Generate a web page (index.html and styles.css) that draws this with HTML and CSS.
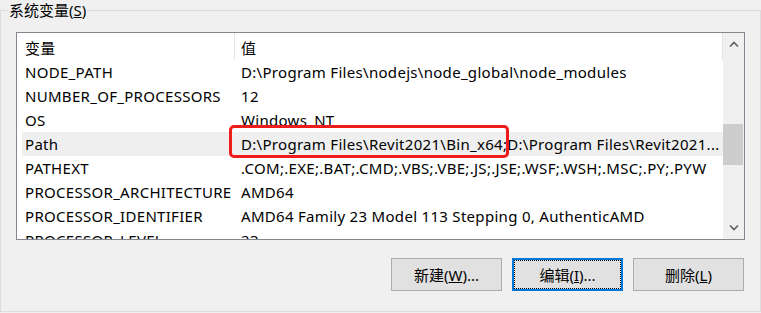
FILE: index.html
```html
<!DOCTYPE html>
<html lang="zh-CN">
<head>
    <meta charset="UTF-8">
    <title>系统变量</title>
    <link rel="stylesheet" href="styles.css">
</head>
<body>

<fieldset class="group">
    <legend>系统变量(<u>S</u>)</legend>

    <div class="list">
        <div class="rows">
            <div class="row head"><span class="name">变量</span><span class="value">值</span></div>
            <div class="row"><span class="name">NODE_PATH</span><span class="value">D:\Program Files\nodejs\node_global\node_modules</span></div>
            <div class="row"><span class="name">NUMBER_OF_PROCESSORS</span><span class="value">12</span></div>
            <div class="row"><span class="name">OS</span><span class="value">Windows_NT</span></div>
            <div class="row selected"><span class="name">Path</span><span class="value">D:\Program Files\Revit2021\Bin_x64;D:\Program Files\Revit2021...</span></div>
            <div class="row"><span class="name">PATHEXT</span><span class="value">.COM;.EXE;.BAT;.CMD;.VBS;.VBE;.JS;.JSE;.WSF;.WSH;.MSC;.PY;.PYW</span></div>
            <div class="row"><span class="name">PROCESSOR_ARCHITECTURE</span><span class="value">AMD64</span></div>
            <div class="row"><span class="name">PROCESSOR_IDENTIFIER</span><span class="value">AMD64 Family 23 Model 113 Stepping 0, AuthenticAMD</span></div>
            <div class="row"><span class="name">PROCESSOR_LEVEL</span><span class="value">23</span></div>
        </div>

        <div class="scrollbar">
            <div class="arrow">
                <svg width="10" height="6" viewBox="0 0 10 6"><polyline points="1,5.5 5,1.5 9,5.5" fill="none" stroke="#606060" stroke-width="1.6"/></svg>
            </div>
            <div class="track"><div class="thumb"></div></div>
            <div class="arrow">
                <svg width="10" height="6" viewBox="0 0 10 6"><polyline points="1,0.5 5,4.5 9,0.5" fill="none" stroke="#606060" stroke-width="1.6"/></svg>
            </div>
        </div>

        <!-- 红框标注 -->
        <div class="mark"></div>
    </div>

    <div class="buttons">
        <button class="btn">新建(<u>W</u>)...</button>
        <button class="btn focus">编辑(<u>I</u>)...</button>
        <button class="btn">删除(<u>L</u>)</button>
    </div>
</fieldset>

</body>
</html>
```

FILE: styles.css
```css
body {
    margin: 0;
    background: #f0f0f0;
    font-family: "Noto Sans", "Noto Sans CJK SC", sans-serif;
    font-size: 15px;
    color: #000;
}
.group {
    margin: 0;
    width: 761px;
    height: 312px;
    box-sizing: border-box;
    border: 1px solid #dcdcdc;
    padding: 12px 15px 0 15px;
}
.group legend {
    margin-left: -8px;
    padding: 0 1px;
    line-height: 20px;
}
.list {
    position: relative;
    display: flex;
    height: 208px;
    box-sizing: border-box;
    border: 1px solid #828790;
    background: #fff;
}
.rows {
    flex: 1;
    overflow: hidden;
    padding-left: 5px;
}
.row {
    display: flex;
    height: 24px;
    line-height: 24px;
    white-space: nowrap;
    letter-spacing: 0.3px;
}
.row.selected {
    background: #efefef;
}
.name {
    flex: none;
    width: 213px;
    padding-left: 3px;
    box-sizing: border-box;
    overflow: hidden;
}
.value {
    flex: 1;
    padding: 0 1px 0 6px;
    overflow: hidden;
}
.head {
    height: 27px;
}
.head .name, .head .value {
    padding-top: 3px;
    border-right: 1px solid #e5e5e5;
}
.scrollbar {
    flex: none;
    width: 21px;
    display: flex;
    flex-direction: column;
    background: #f0f0f0;
}
.arrow {
    height: 22px;
    display: flex;
    align-items: center;
    justify-content: center;
}
.track {
    flex: 1;
}
.thumb {
    margin-top: 69px;
    margin-right: 1px;
    height: 41px;
    background: #cdcdcd;
}
.mark {
    position: absolute;
    left: 212px;
    top: 92px;
    width: 280px;
    height: 33px;
    box-sizing: border-box;
    border: 3px solid #f01c1c;
    border-radius: 5px;
}
.buttons {
    display: flex;
    justify-content: flex-end;
    gap: 10px;
    margin-top: 18px;
    margin-right: 1px;
}
.btn {
    width: 111px;
    height: 33px;
    box-sizing: border-box;
    padding: 0;
    border: 1px solid #adadad;
    background: #e1e1e1;
    font: inherit;
    color: #000;
}
.btn.focus {
    border: 2px solid #0078d7;
    outline: 1px dotted #000;
    outline-offset: -3px;
}
```
